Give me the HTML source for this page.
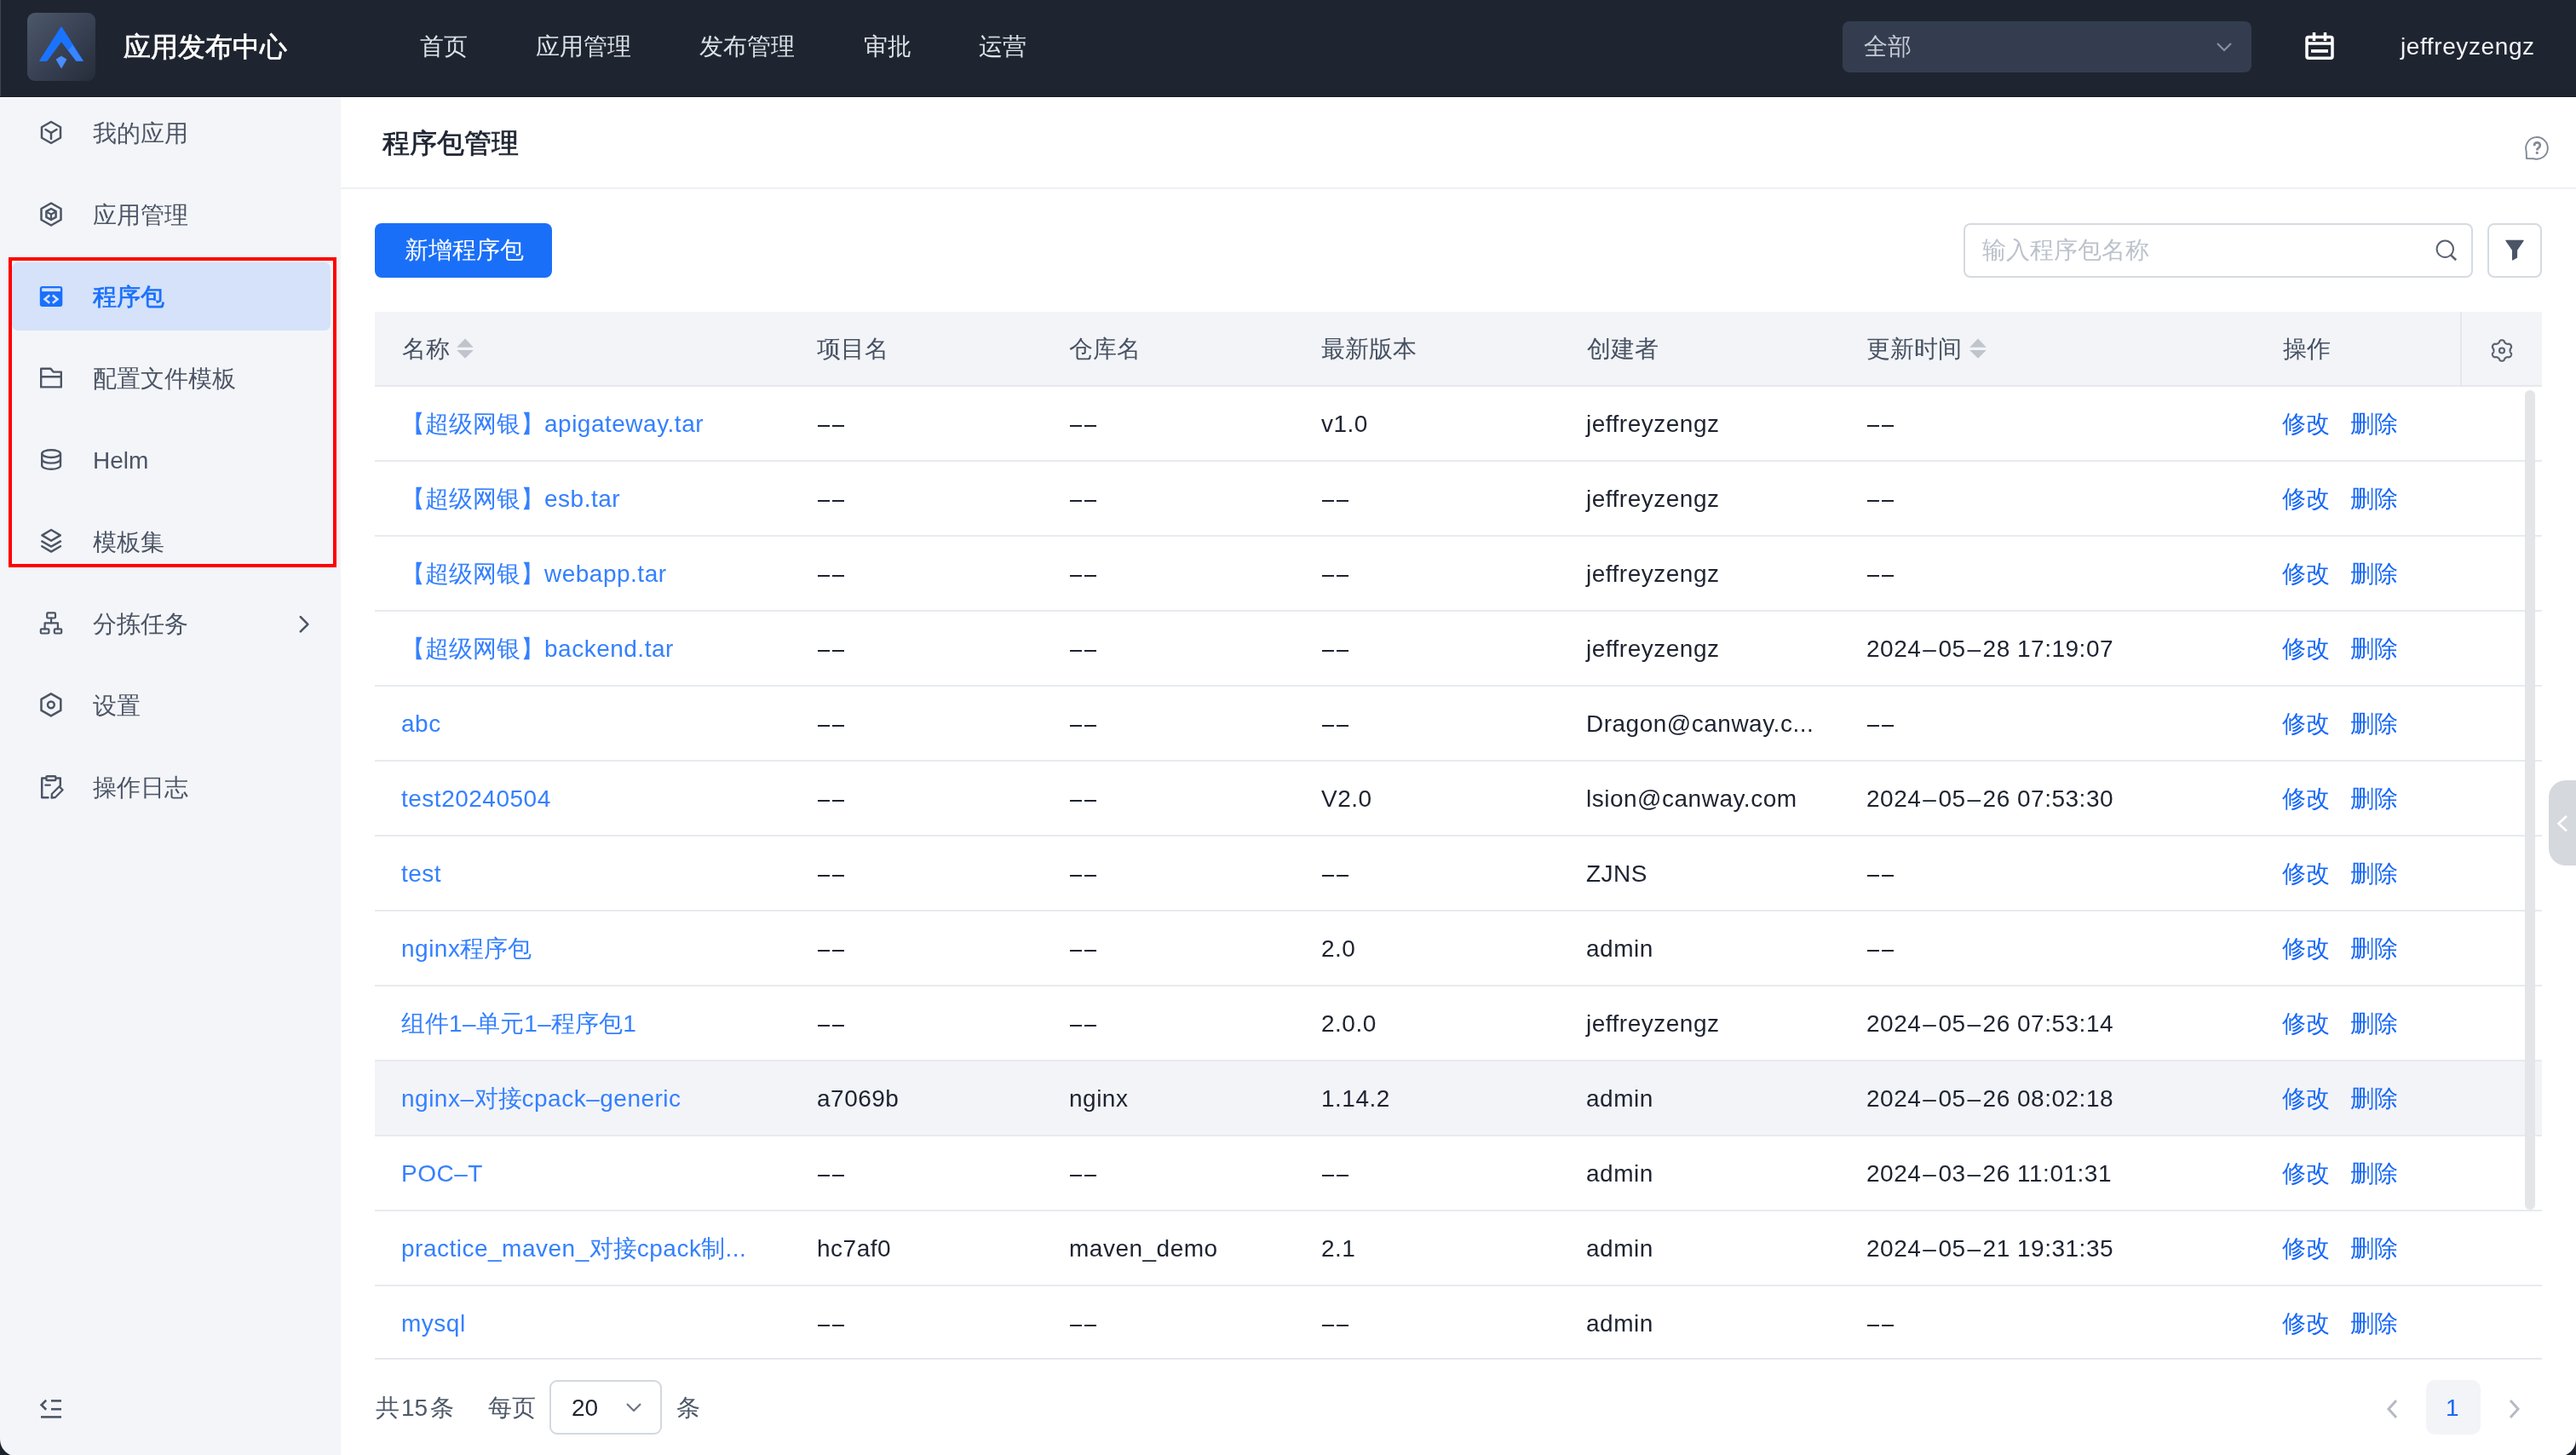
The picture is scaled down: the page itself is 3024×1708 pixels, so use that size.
<!DOCTYPE html>
<html><head><meta charset="utf-8">
<style>
*{box-sizing:border-box;margin:0;padding:0}
html,body{width:3024px;height:1708px;overflow:hidden;background:#fff;font-family:"Liberation Sans",sans-serif;}
body>*{will-change:transform}
.l{letter-spacing:0.5px}
.dd{position:absolute;width:31px;height:2px;background:linear-gradient(90deg,#1d2330 0,#1d2330 14px,transparent 14px,transparent 17px,#1d2330 17px)}
.med{-webkit-text-stroke:0.7px currentColor}
.abs{position:absolute}
.t{position:absolute;white-space:nowrap;line-height:1}
#hdr{position:absolute;left:0;top:0;width:3024px;height:114px;background:#1f2530}
#side{position:absolute;left:0;top:114px;width:400px;height:1594px;background:#f4f5f8}
.nav{position:absolute;top:41px;font-size:28px;color:#dde1e7;white-space:nowrap;line-height:28px}
.mi{position:absolute;left:109px;font-size:28px;color:#4b5566;white-space:nowrap;line-height:28px}
.ic{position:absolute;left:44px;width:32px;height:32px}
.th{position:absolute;top:396px;font-size:28px;color:#465163;white-space:nowrap;line-height:28px}
.row{position:absolute;left:440px;width:2544px;height:88px;border-bottom:2px solid #e8eaef}
.cl{position:absolute;font-size:28px;color:#3480ff;white-space:nowrap;line-height:28px}
.cd{position:absolute;font-size:28px;color:#1d2330;white-space:nowrap;line-height:28px}
.ca{position:absolute;font-size:28px;color:#1768f7;white-space:nowrap;line-height:28px}
.pg{position:absolute;top:1639px;font-size:28px;color:#4e5969;white-space:nowrap;line-height:28px}
</style></head><body>
<div id="hdr">
  <div class="abs" style="left:0;top:0;width:1px;height:114px;background:#3b4559"></div><div class="abs" style="left:0;top:113px;width:3024px;height:1px;background:#131923"></div>
  <div class="abs" style="left:32px;top:15px;width:80px;height:80px;border-radius:9px;background:linear-gradient(135deg,#4d576a 0%,#3d4759 40%,#333c4d 65%,#262c38 100%)"></div>
  <svg class="abs" style="left:32px;top:15px" width="80" height="80" viewBox="32 15 80 80">
    <polygon points="72,31.5 97.5,71.5 89.5,71.5 72,48.5 55,71.5 46.5,71.5" fill="#1a73ff" stroke="#1a73ff" stroke-width="1" stroke-linejoin="round"/><polygon points="80,59 89.5,71.5 97.5,71.5 85,53" fill="#3a85ff"/>
    <polygon points="72,66 78,69.8 72,80 66,69.8" fill="#4a8dff" stroke="#4a8dff" stroke-width="0.8" stroke-linejoin="round"/>
  </svg>
  <div class="t med" style="left:145px;top:39px;font-size:32px;color:#fff">应用发布中心</div>
  <div class="nav" style="left:493px">首页</div>
  <div class="nav" style="left:629px">应用管理</div>
  <div class="nav" style="left:821px">发布管理</div>
  <div class="nav" style="left:1014px">审批</div>
  <div class="nav" style="left:1149px">运营</div>
  <div class="abs" style="left:2163px;top:25px;width:480px;height:60px;border-radius:8px;background:#343d50"></div>
  <div class="nav" style="left:2188px;color:#c6cbd3">全部</div>
  <svg class="abs" style="left:2601px;top:48px" width="20" height="14" viewBox="0 0 20 14"><polyline points="2,3 10,11 18,3" fill="none" stroke="#8a909c" stroke-width="2.2"/></svg>
  <svg class="abs" style="left:2700px;top:32px" width="48" height="46" viewBox="0 0 48 46" fill="none" stroke="#fff" stroke-width="3.5">
    <rect x="8" y="11.5" width="30" height="24.7" rx="2"/>
    <line x1="16.5" y1="6" x2="16.5" y2="16"/><line x1="29.5" y1="6" x2="29.5" y2="16"/>
    <line x1="8" y1="19" x2="38" y2="19"/>
    <rect x="13" y="26" width="20" height="3.8" fill="#fff" stroke="none"/>
  </svg>
  <div class="nav" style="left:2818px;color:#f2f3f5;letter-spacing:0.6px">jeffreyzengz</div>
</div>

<div id="side"></div>
<div class="abs" style="left:14px;top:308px;width:374px;height:80px;border-radius:7px;background:#d5e2fa"></div>
<div class="abs" style="left:10px;top:302px;width:385px;height:364px;border:4px solid #ff0000"></div>
<svg class="abs" style="left:0;top:0" width="400" height="1708" viewBox="0 0 400 1708" fill="none" stroke="#4b5566" stroke-width="2.5" stroke-linejoin="round" stroke-linecap="round">
  <!-- my apps: hex cube -->
  <polygon points="60,143 71,149.25 71,161.75 60,168 49,161.75 49,149.25"/>
  <polyline points="53.5,152 60,156 66.5,152"/><line x1="60" y1="156" x2="60" y2="163"/>
  <!-- app mgmt -->
  <polygon points="60,238.5 71.5,245 71.5,258 60,264.5 48.5,258 48.5,245"/>
  <polygon points="60,245 65.6,248.2 65.6,254.8 60,258 54.4,254.8 54.4,248.2"/>
  <polyline points="55,248.8 60,251.6 65,248.8" stroke-width="2.2"/><line x1="60" y1="251.6" x2="60" y2="257" stroke-width="2.2"/>
  <!-- program package active -->
  <rect x="46.8" y="335.9" width="26.5" height="24" rx="3" fill="#1a70fc" stroke="none"/>
  <rect x="49.2" y="338.3" width="21.8" height="3.8" fill="#d5e2fa" stroke="none"/>
  <polyline points="58.2,346.6 52.6,351.2 58.2,355.8" stroke="#d5e2fa" stroke-width="2.6" stroke-linecap="butt" stroke-linejoin="miter"/>
  <polyline points="61.8,346.6 67.4,351.2 61.8,355.8" stroke="#d5e2fa" stroke-width="2.6" stroke-linecap="butt" stroke-linejoin="miter"/>
  <!-- folder -->
  <path d="M48.2,432.7 H59.5 L62.6,436.6 H71.8 V454.4 H48.2 Z" stroke-width="2.4"/>
  <line x1="48.2" y1="442.2" x2="71.8" y2="442.2" stroke-width="2.4"/>
  <!-- database -->
  <ellipse cx="60.1" cy="532.6" rx="10.9" ry="4.4" stroke-width="2.4"/>
  <path d="M49.2,532.6 V546.4 A10.9,4.4 0 0 0 71,546.4 V532.6" stroke-width="2.4"/>
  <path d="M49.2,539.2 A10.9,4.4 0 0 0 71,539.2" stroke-width="2.4"/>
  <!-- layers -->
  <polygon points="60.1,622 70.8,628.4 60.1,634.8 49.4,628.4" stroke-width="2.4"/>
  <polyline points="49.2,635.4 60.1,641.6 71,635.4" stroke-width="2.4"/>
  <polyline points="49.2,641.2 60.1,647.6 71,641.2" stroke-width="2.4"/>
  <!-- org chart -->
  <rect x="55.2" y="719.3" width="9.8" height="6.2" rx="1.2" stroke-width="2.2"/>
  <rect x="47.8" y="738.3" width="9.6" height="5.2" rx="1.2" stroke-width="2.2"/>
  <rect x="63.8" y="738.3" width="8.4" height="5.2" rx="1.2" stroke-width="2.2"/>
  <polyline points="52.6,738.3 52.6,731.4 67.9,731.4 67.9,738.3" stroke-width="2.2"/>
  <line x1="60.1" y1="725.5" x2="60.1" y2="731.4" stroke-width="2.2"/>
  <!-- settings -->
  <polygon points="59.9,814.3 71.3,820.9 71.3,833.9 59.9,840.4 48.5,833.9 48.5,820.9" stroke-width="2.5"/>
  <circle cx="59.9" cy="827.3" r="3.9" stroke-width="2.5"/>
  <!-- op log -->
  <path d="M53,913.5 H49.2 V936.3 H56.5" stroke-width="2.5"/>
  <path d="M66.8,913.5 H70.8 V922" stroke-width="2.5"/>
  <rect x="54.4" y="911.2" width="11" height="4.8" rx="1" stroke-width="2.4"/>
  <line x1="53.4" y1="921.6" x2="58.6" y2="921.6" stroke-width="2.4"/>
  <path d="M60.6,936.5 L60.9,932 L69.6,923.3 L73.6,927.3 L64.9,936 Z" stroke-width="2.3"/>
  <!-- chevron -->
  <polyline points="352.8,724.2 361.4,732.8 352.8,741.4" stroke-width="2.6"/>
  <!-- collapse -->
  <polyline points="54.2,1643.8 48.6,1649.3 54.2,1654.8" stroke-width="2.6" stroke-linecap="butt" stroke-linejoin="miter"/>
  <line x1="60" y1="1644.4" x2="72" y2="1644.4" stroke-width="2.6" stroke-linecap="butt"/>
  <line x1="60" y1="1654.2" x2="72" y2="1654.2" stroke-width="2.6" stroke-linecap="butt"/>
  <line x1="48" y1="1663.4" x2="72" y2="1663.4" stroke-width="2.6" stroke-linecap="butt"/>
</svg>
<div class="mi" style="top:143px">我的应用</div>
<div class="mi" style="top:239px">应用管理</div>
<div class="mi med" style="top:335px;color:#1a70fc">程序包</div>
<div class="mi" style="top:431px">配置文件模板</div>
<div class="mi" style="top:527px">Helm</div>
<div class="mi" style="top:623px">模板集</div>
<div class="mi" style="top:719px">分拣任务</div>
<div class="mi" style="top:815px">设置</div>
<div class="mi" style="top:911px">操作日志</div>

<!-- main -->
<div class="t med" style="left:449px;top:152px;font-size:32px;color:#1d2330">程序包管理</div>
<svg class="abs" style="left:2960px;top:156px" width="36" height="36" viewBox="0 0 36 36" fill="none" stroke="#838a97" stroke-width="1.9">
  <path d="M5.66,21.5 A12.85,12.85 0 1 1 14.4,30.24 L6,30.15 Z" stroke-linejoin="round"/>
  <path d="M15,15.2 Q15,11.4 18.4,11.4 Q21.8,11.4 21.8,14.8 Q21.8,16.8 19.6,18 Q18.3,18.8 18.3,20.6" stroke-width="2.7"/>
  <circle cx="18.3" cy="23.4" r="1.6" fill="#838a97" stroke="none"/>
</svg>
<div class="abs" style="left:400px;top:220px;width:2624px;height:2px;background:#eef0f4"></div>
<div class="abs" style="left:440px;top:262px;width:208px;height:64px;border-radius:8px;background:#1a6ff8"></div>
<div class="t" style="left:475px;top:280px;font-size:28px;color:#fff">新增程序包</div>
<div class="abs" style="left:2305px;top:262px;width:598px;height:64px;border-radius:8px;border:2px solid #d5dae2;background:#fff"></div>
<div class="t" style="left:2327px;top:280px;font-size:28px;color:#bcc2cc">输入程序包名称</div>
<svg class="abs" style="left:2855px;top:278px" width="32" height="32" viewBox="0 0 32 32" fill="none" stroke="#596171" stroke-width="2">
  <circle cx="15.3" cy="14.3" r="9.7"/><line x1="22" y1="21.4" x2="28.2" y2="27.3" stroke-width="2.6"/>
</svg>
<div class="abs" style="left:2920px;top:262px;width:64px;height:64px;border-radius:8px;border:2px solid #d5dae2;background:#fff"></div>
<svg class="abs" style="left:2936px;top:278px" width="32" height="32" viewBox="0 0 32 32">
  <path d="M6,4.4 H26 L18.4,15.6 V24.2 L13.7,27 V15.6 Z" fill="#4b5566" stroke="#4b5566" stroke-width="1.4" stroke-linejoin="round"/>
</svg>
<!-- table -->
<div class="abs" style="left:440px;top:366px;width:2544px;height:88px;background:#f3f4f7;border-bottom:2px solid #e6e8ed"></div>
<div class="abs" style="left:2888px;top:366px;width:2px;height:86px;background:#e4e7ec"></div>
<div class="th" style="left:472px">名称</div>
<div class="th" style="left:959px">项目名</div>
<div class="th" style="left:1255px">仓库名</div>
<div class="th" style="left:1551px">最新版本</div>
<div class="th" style="left:1863px">创建者</div>
<div class="th" style="left:2191px">更新时间</div>
<div class="th" style="left:2680px">操作</div>
<svg class="abs" style="left:536px;top:397px" width="20" height="24" viewBox="0 0 20 24" fill="#bfc4cd"><polygon points="10,0.5 19.8,10.7 0.2,10.7"/><polygon points="0.2,14 19.8,14 10,23.8"/></svg>
<svg class="abs" style="left:2312px;top:397px" width="20" height="24" viewBox="0 0 20 24" fill="#bfc4cd"><polygon points="10,0.5 19.8,10.7 0.2,10.7"/><polygon points="0.2,14 19.8,14 10,23.8"/></svg>
<svg class="abs" style="left:2920px;top:395px" width="34" height="34" viewBox="0 0 34 34" fill="none" stroke="#5b6372" stroke-width="2.2" stroke-linejoin="round">
  <path d="M17.00,4.25 L17.32,4.26 L17.64,4.31 L17.95,4.38 L18.26,4.48 L18.57,4.61 L18.86,4.76 L19.14,4.96 L19.40,5.19 L19.65,5.47 L19.82,5.97 L19.97,6.47 L20.16,6.77 L20.36,7.02 L20.55,7.24 L20.75,7.44 L20.95,7.63 L21.15,7.80 L21.35,7.96 L21.56,8.10 L21.77,8.23 L22.00,8.35 L22.22,8.46 L22.46,8.56 L22.71,8.64 L22.97,8.72 L23.24,8.79 L23.53,8.85 L23.85,8.90 L24.20,8.92 L24.71,8.79 L25.23,8.69 L25.60,8.76 L25.93,8.88 L26.23,9.02 L26.52,9.20 L26.78,9.39 L27.02,9.61 L27.24,9.85 L27.44,10.10 L27.61,10.38 L27.76,10.66 L27.88,10.96 L27.98,11.27 L28.04,11.58 L28.08,11.91 L28.09,12.24 L28.07,12.58 L28.00,12.93 L27.88,13.28 L27.53,13.68 L27.17,14.06 L27.01,14.37 L26.89,14.67 L26.80,14.95 L26.72,15.22 L26.66,15.48 L26.61,15.74 L26.58,16.00 L26.56,16.25 L26.55,16.50 L26.56,16.75 L26.58,17.00 L26.61,17.26 L26.66,17.52 L26.72,17.78 L26.80,18.05 L26.89,18.33 L27.01,18.63 L27.17,18.94 L27.53,19.32 L27.88,19.72 L28.00,20.07 L28.07,20.42 L28.09,20.76 L28.08,21.09 L28.04,21.42 L27.98,21.73 L27.88,22.04 L27.76,22.34 L27.61,22.62 L27.44,22.90 L27.24,23.15 L27.02,23.39 L26.78,23.61 L26.52,23.80 L26.23,23.98 L25.93,24.12 L25.60,24.24 L25.23,24.31 L24.71,24.21 L24.20,24.08 L23.85,24.10 L23.53,24.15 L23.24,24.21 L22.97,24.28 L22.71,24.36 L22.46,24.44 L22.22,24.54 L22.00,24.65 L21.77,24.77 L21.56,24.90 L21.35,25.04 L21.15,25.20 L20.95,25.37 L20.75,25.56 L20.55,25.76 L20.36,25.98 L20.16,26.23 L19.97,26.53 L19.82,27.03 L19.65,27.53 L19.40,27.81 L19.14,28.04 L18.86,28.24 L18.57,28.39 L18.26,28.52 L17.95,28.62 L17.64,28.69 L17.32,28.74 L17.00,28.75 L16.68,28.74 L16.36,28.69 L16.05,28.62 L15.74,28.52 L15.43,28.39 L15.14,28.24 L14.86,28.04 L14.60,27.81 L14.35,27.53 L14.18,27.03 L14.03,26.53 L13.84,26.23 L13.64,25.98 L13.45,25.76 L13.25,25.56 L13.05,25.37 L12.85,25.20 L12.65,25.04 L12.44,24.90 L12.23,24.77 L12.00,24.65 L11.78,24.54 L11.54,24.44 L11.29,24.36 L11.03,24.28 L10.76,24.21 L10.47,24.15 L10.15,24.10 L9.80,24.08 L9.29,24.21 L8.77,24.31 L8.40,24.24 L8.07,24.12 L7.77,23.98 L7.48,23.80 L7.22,23.61 L6.98,23.39 L6.76,23.15 L6.56,22.90 L6.39,22.63 L6.24,22.34 L6.12,22.04 L6.02,21.73 L5.96,21.42 L5.92,21.09 L5.91,20.76 L5.93,20.42 L6.00,20.07 L6.12,19.72 L6.47,19.32 L6.83,18.94 L6.99,18.63 L7.11,18.33 L7.20,18.05 L7.28,17.78 L7.34,17.52 L7.39,17.26 L7.42,17.00 L7.44,16.75 L7.45,16.50 L7.44,16.25 L7.42,16.00 L7.39,15.74 L7.34,15.48 L7.28,15.22 L7.20,14.95 L7.11,14.67 L6.99,14.37 L6.83,14.06 L6.47,13.68 L6.12,13.28 L6.00,12.93 L5.93,12.58 L5.91,12.24 L5.92,11.91 L5.96,11.58 L6.02,11.27 L6.12,10.96 L6.24,10.66 L6.39,10.37 L6.56,10.10 L6.76,9.85 L6.98,9.61 L7.22,9.39 L7.48,9.20 L7.77,9.02 L8.07,8.88 L8.40,8.76 L8.77,8.69 L9.29,8.79 L9.80,8.92 L10.15,8.90 L10.47,8.85 L10.76,8.79 L11.03,8.72 L11.29,8.64 L11.54,8.56 L11.78,8.46 L12.00,8.35 L12.23,8.23 L12.44,8.10 L12.65,7.96 L12.85,7.80 L13.05,7.63 L13.25,7.44 L13.45,7.24 L13.64,7.02 L13.84,6.77 L14.03,6.47 L14.18,5.97 L14.35,5.47 L14.60,5.19 L14.86,4.96 L15.14,4.76 L15.43,4.61 L15.74,4.48 L16.05,4.38 L16.36,4.31 L16.68,4.26 Z"/>
  <circle cx="17" cy="16.5" r="3"/>
</svg>
<div class="abs" style="left:440px;top:454px;width:2544px;height:1140px;overflow:hidden">
<div class="abs" style="left:-440px;top:-454px;width:3024px;height:1708px">
<div class="row" style="top:454px;background:#fff"></div>
<div class="cl" style="left:471px;top:484px">【超级网银】<span class="l">apigateway.tar</span></div>
<div class="dd" style="left:960px;top:499px"></div>
<div class="dd" style="left:1256px;top:499px"></div>
<div class="cd" style="left:1551px;top:484px"><span class="l">v1.0</span></div>
<div class="cd" style="left:1862px;top:484px"><span class="l">jeffreyzengz</span></div>
<div class="dd" style="left:2192px;top:499px"></div>
<div class="ca" style="left:2679px;top:484px">修改</div><div class="ca" style="left:2759px;top:484px">删除</div>
<div class="row" style="top:542px;background:#fff"></div>
<div class="cl" style="left:471px;top:572px">【超级网银】<span class="l">esb.tar</span></div>
<div class="dd" style="left:960px;top:587px"></div>
<div class="dd" style="left:1256px;top:587px"></div>
<div class="dd" style="left:1552px;top:587px"></div>
<div class="cd" style="left:1862px;top:572px"><span class="l">jeffreyzengz</span></div>
<div class="dd" style="left:2192px;top:587px"></div>
<div class="ca" style="left:2679px;top:572px">修改</div><div class="ca" style="left:2759px;top:572px">删除</div>
<div class="row" style="top:630px;background:#fff"></div>
<div class="cl" style="left:471px;top:660px">【超级网银】<span class="l">webapp.tar</span></div>
<div class="dd" style="left:960px;top:675px"></div>
<div class="dd" style="left:1256px;top:675px"></div>
<div class="dd" style="left:1552px;top:675px"></div>
<div class="cd" style="left:1862px;top:660px"><span class="l">jeffreyzengz</span></div>
<div class="dd" style="left:2192px;top:675px"></div>
<div class="ca" style="left:2679px;top:660px">修改</div><div class="ca" style="left:2759px;top:660px">删除</div>
<div class="row" style="top:718px;background:#fff"></div>
<div class="cl" style="left:471px;top:748px">【超级网银】<span class="l">backend.tar</span></div>
<div class="dd" style="left:960px;top:763px"></div>
<div class="dd" style="left:1256px;top:763px"></div>
<div class="dd" style="left:1552px;top:763px"></div>
<div class="cd" style="left:1862px;top:748px"><span class="l">jeffreyzengz</span></div>
<div class="cd" style="left:2191px;top:748px"><span class="l">2024<span style="margin:0 2px">–</span>05<span style="margin:0 2px">–</span>28 17:19:07</span></div>
<div class="ca" style="left:2679px;top:748px">修改</div><div class="ca" style="left:2759px;top:748px">删除</div>
<div class="row" style="top:806px;background:#fff"></div>
<div class="cl" style="left:471px;top:836px"><span class="l">abc</span></div>
<div class="dd" style="left:960px;top:851px"></div>
<div class="dd" style="left:1256px;top:851px"></div>
<div class="dd" style="left:1552px;top:851px"></div>
<div class="cd" style="left:1862px;top:836px"><span class="l">Dragon@canway.c...</span></div>
<div class="dd" style="left:2192px;top:851px"></div>
<div class="ca" style="left:2679px;top:836px">修改</div><div class="ca" style="left:2759px;top:836px">删除</div>
<div class="row" style="top:894px;background:#fff"></div>
<div class="cl" style="left:471px;top:924px"><span class="l">test20240504</span></div>
<div class="dd" style="left:960px;top:939px"></div>
<div class="dd" style="left:1256px;top:939px"></div>
<div class="cd" style="left:1551px;top:924px"><span class="l">V2.0</span></div>
<div class="cd" style="left:1862px;top:924px"><span class="l">lsion@canway.com</span></div>
<div class="cd" style="left:2191px;top:924px"><span class="l">2024<span style="margin:0 2px">–</span>05<span style="margin:0 2px">–</span>26 07:53:30</span></div>
<div class="ca" style="left:2679px;top:924px">修改</div><div class="ca" style="left:2759px;top:924px">删除</div>
<div class="row" style="top:982px;background:#fff"></div>
<div class="cl" style="left:471px;top:1012px"><span class="l">test</span></div>
<div class="dd" style="left:960px;top:1027px"></div>
<div class="dd" style="left:1256px;top:1027px"></div>
<div class="dd" style="left:1552px;top:1027px"></div>
<div class="cd" style="left:1862px;top:1012px"><span class="l">ZJNS</span></div>
<div class="dd" style="left:2192px;top:1027px"></div>
<div class="ca" style="left:2679px;top:1012px">修改</div><div class="ca" style="left:2759px;top:1012px">删除</div>
<div class="row" style="top:1070px;background:#fff"></div>
<div class="cl" style="left:471px;top:1100px"><span class="l">nginx</span>程序包</div>
<div class="dd" style="left:960px;top:1115px"></div>
<div class="dd" style="left:1256px;top:1115px"></div>
<div class="cd" style="left:1551px;top:1100px"><span class="l">2.0</span></div>
<div class="cd" style="left:1862px;top:1100px"><span class="l">admin</span></div>
<div class="dd" style="left:2192px;top:1115px"></div>
<div class="ca" style="left:2679px;top:1100px">修改</div><div class="ca" style="left:2759px;top:1100px">删除</div>
<div class="row" style="top:1158px;background:#fff"></div>
<div class="cl" style="left:471px;top:1188px">组件<span class="l">1–</span>单元<span class="l">1–</span>程序包<span class="l">1</span></div>
<div class="dd" style="left:960px;top:1203px"></div>
<div class="dd" style="left:1256px;top:1203px"></div>
<div class="cd" style="left:1551px;top:1188px"><span class="l">2.0.0</span></div>
<div class="cd" style="left:1862px;top:1188px"><span class="l">jeffreyzengz</span></div>
<div class="cd" style="left:2191px;top:1188px"><span class="l">2024<span style="margin:0 2px">–</span>05<span style="margin:0 2px">–</span>26 07:53:14</span></div>
<div class="ca" style="left:2679px;top:1188px">修改</div><div class="ca" style="left:2759px;top:1188px">删除</div>
<div class="row" style="top:1246px;background:#f3f4f8"></div>
<div class="cl" style="left:471px;top:1276px"><span class="l">nginx–</span>对接<span class="l">cpack–generic</span></div>
<div class="cd" style="left:959px;top:1276px"><span class="l">a7069b</span></div>
<div class="cd" style="left:1255px;top:1276px"><span class="l">nginx</span></div>
<div class="cd" style="left:1551px;top:1276px"><span class="l">1.14.2</span></div>
<div class="cd" style="left:1862px;top:1276px"><span class="l">admin</span></div>
<div class="cd" style="left:2191px;top:1276px"><span class="l">2024<span style="margin:0 2px">–</span>05<span style="margin:0 2px">–</span>26 08:02:18</span></div>
<div class="ca" style="left:2679px;top:1276px">修改</div><div class="ca" style="left:2759px;top:1276px">删除</div>
<div class="row" style="top:1334px;background:#fff"></div>
<div class="cl" style="left:471px;top:1364px"><span class="l">POC–T</span></div>
<div class="dd" style="left:960px;top:1379px"></div>
<div class="dd" style="left:1256px;top:1379px"></div>
<div class="dd" style="left:1552px;top:1379px"></div>
<div class="cd" style="left:1862px;top:1364px"><span class="l">admin</span></div>
<div class="cd" style="left:2191px;top:1364px"><span class="l">2024<span style="margin:0 2px">–</span>03<span style="margin:0 2px">–</span>26 11:01:31</span></div>
<div class="ca" style="left:2679px;top:1364px">修改</div><div class="ca" style="left:2759px;top:1364px">删除</div>
<div class="row" style="top:1422px;background:#fff"></div>
<div class="cl" style="left:471px;top:1452px"><span class="l">practice_maven_</span>对接<span class="l">cpack</span>制<span class="l">...</span></div>
<div class="cd" style="left:959px;top:1452px"><span class="l">hc7af0</span></div>
<div class="cd" style="left:1255px;top:1452px"><span class="l">maven_demo</span></div>
<div class="cd" style="left:1551px;top:1452px"><span class="l">2.1</span></div>
<div class="cd" style="left:1862px;top:1452px"><span class="l">admin</span></div>
<div class="cd" style="left:2191px;top:1452px"><span class="l">2024<span style="margin:0 2px">–</span>05<span style="margin:0 2px">–</span>21 19:31:35</span></div>
<div class="ca" style="left:2679px;top:1452px">修改</div><div class="ca" style="left:2759px;top:1452px">删除</div>
<div class="row" style="top:1510px;background:#fff"></div>
<div class="cl" style="left:471px;top:1540px"><span class="l">mysql</span></div>
<div class="dd" style="left:960px;top:1555px"></div>
<div class="dd" style="left:1256px;top:1555px"></div>
<div class="dd" style="left:1552px;top:1555px"></div>
<div class="cd" style="left:1862px;top:1540px"><span class="l">admin</span></div>
<div class="dd" style="left:2192px;top:1555px"></div>
<div class="ca" style="left:2679px;top:1540px">修改</div><div class="ca" style="left:2759px;top:1540px">删除</div>
</div></div>
<div class="abs" style="left:440px;top:1594px;width:2544px;height:2px;background:#e6e8ed"></div>
<div class="abs" style="left:2964px;top:458px;width:12px;height:962px;border-radius:6px;background:#e3e5e9"></div>
<div class="abs" style="left:2992px;top:916px;width:60px;height:100px;border-radius:20px 0 0 20px;background:#d5d8dd"></div>
<svg class="abs" style="left:2996px;top:954px" width="24" height="26" viewBox="0 0 24 26" fill="none" stroke="#fff" stroke-width="2.6"><polyline points="17,4 7.5,12.7 17,21.5"/></svg>
<!-- pagination -->
<div class="pg" style="left:441px">共<span style="margin:0 1px 0 2px">15</span><span style="margin-left:2px">条</span></div>
<div class="pg" style="left:573px">每页</div>
<div class="abs" style="left:645px;top:1620px;width:132px;height:64px;border-radius:9px;border:2px solid #d3d8e0"></div>
<div class="pg" style="left:671px;color:#1d2330">20</div>
<svg class="abs" style="left:732px;top:1644px" width="24" height="16" viewBox="0 0 24 16" fill="none" stroke="#6b7483" stroke-width="2.2"><polyline points="4,4 12,12 20,4"/></svg>
<div class="pg" style="left:794px">条</div>
<svg class="abs" style="left:2796px;top:1640px" width="24" height="28" viewBox="0 0 24 28" fill="none" stroke="#b5bac3" stroke-width="3"><polyline points="17,4 8,14 17,24"/></svg>
<div class="abs" style="left:2848px;top:1620px;width:64px;height:64px;border-radius:10px;background:#f3f4f7"></div>
<div class="t" style="left:2871px;top:1639px;font-size:28px;color:#1768f7">1</div>
<svg class="abs" style="left:2940px;top:1640px" width="24" height="28" viewBox="0 0 24 28" fill="none" stroke="#b5bac3" stroke-width="3"><polyline points="7,4 16,14 7,24"/></svg>
<svg class="abs" style="left:0;top:1680px" width="3024" height="28" viewBox="0 1680 3024 28"><path d="M0,1689 C0,1697 4,1704 12,1708 L0,1708 Z" fill="#1d232d"/><path d="M3024,1689 C3024,1697 3020,1704 3012,1708 L3024,1708 Z" fill="#1d232d"/></svg>
</body></html>
